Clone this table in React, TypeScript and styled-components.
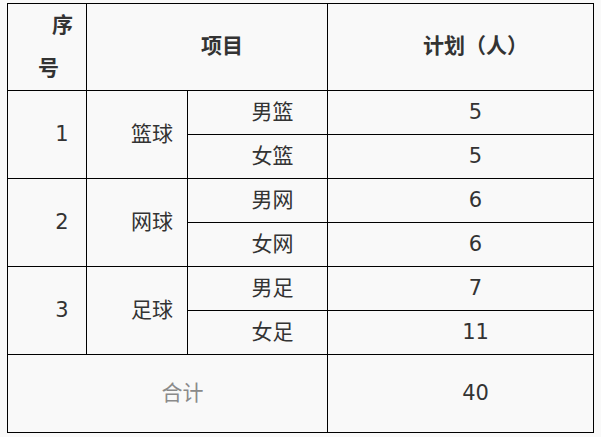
import React from "react";
import styled, { createGlobalStyle } from "styled-components";

type PlanRow = {
  no: number;
  sport: string;
  items: { name: string; count: number }[];
};

const rows: PlanRow[] = [
  { no: 1, sport: "篮球", items: [{ name: "男篮", count: 5 }, { name: "女篮", count: 5 }] },
  { no: 2, sport: "网球", items: [{ name: "男网", count: 6 }, { name: "女网", count: 6 }] },
  { no: 3, sport: "足球", items: [{ name: "男足", count: 7 }, { name: "女足", count: 11 }] },
];

const GlobalStyle = createGlobalStyle`
  html, body {
    margin: 0;
    background: #f9f9f9;
  }
  body {
    font-family: "DejaVu Sans", "Noto Sans CJK SC", sans-serif;
    color: #333;
  }
`;

const Page = styled.div`
  padding: 3px 0 0 7px;
`;

const Table = styled.table`
  border-collapse: collapse;
  table-layout: fixed;
  width: 587px;
  border: 1px solid #000;
`;

const HeadRow = styled.tr`
  height: 87px;
`;

const Row = styled.tr`
  height: 44px;
`;

const TotalRow = styled.tr`
  height: 78px;
`;

const Cell = styled.td<{ $bold?: boolean; $muted?: boolean }>`
  border: 1px solid #000;
  padding: 0 0 2px 30px;
  text-align: center;
  vertical-align: middle;
  font-size: 21px;
  line-height: 24px;
  font-weight: ${(p) => (p.$bold ? 700 : 400)};
  color: ${(p) => (p.$muted ? "#8a8a8a" : "#333")};
  white-space: nowrap;
`;

const NoHead = styled(Cell)`
  text-align: left;
  text-indent: 14px;
  line-height: 43px;
  padding-bottom: 0;
`;

export default function App() {
  return (
    <Page>
      <GlobalStyle />
      <Table>
        <colgroup>
          <col style={{ width: 79 }} />
          <col style={{ width: 101 }} />
          <col style={{ width: 140 }} />
          <col style={{ width: 266 }} />
        </colgroup>
        <tbody>
          <HeadRow>
            <NoHead $bold>
              序<br />号
            </NoHead>
            <Cell $bold colSpan={2}>
              项目
            </Cell>
            <Cell $bold>计划（人）</Cell>
          </HeadRow>
          {rows.map((r) =>
            r.items.map((it, i) => (
              <Row key={it.name}>
                {i === 0 && <Cell rowSpan={r.items.length}>{r.no}</Cell>}
                {i === 0 && <Cell rowSpan={r.items.length}>{r.sport}</Cell>}
                <Cell>{it.name}</Cell>
                <Cell>{it.count}</Cell>
              </Row>
            ))
          )}
          <TotalRow>
            <Cell $muted colSpan={3}>
              合计
            </Cell>
            <Cell>40</Cell>
          </TotalRow>
        </tbody>
      </Table>
    </Page>
  );
}
